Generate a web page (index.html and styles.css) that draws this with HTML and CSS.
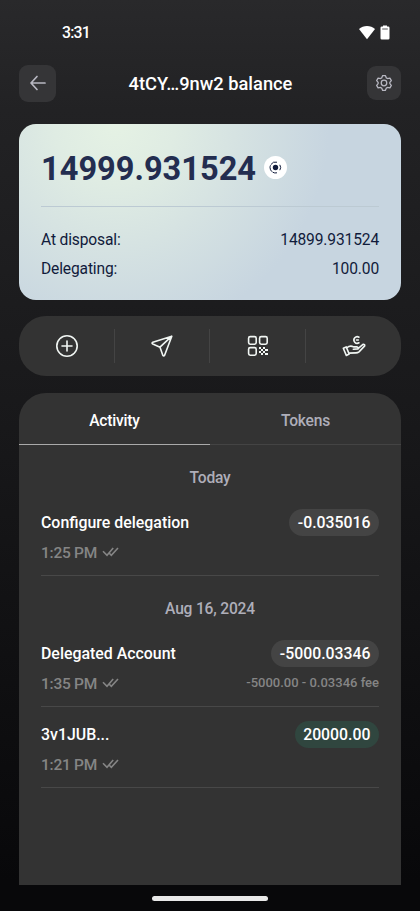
FILE: index.html
```
<!DOCTYPE html>
<html lang="en">
<head>
<meta charset="utf-8">
<title>Account balance</title>
<link rel="stylesheet" href="styles.css">
</head>
<body>
<div class="screen">
  <div class="statusbar">
    <span class="clock">3:31</span>
    <div class="status-icons">
      <svg width="18" height="15" viewBox="0 0 18 15"><path d="M9 14.200 1 4.100C3.200 2 6 .9 9 .9s5.800 1.100 8 3.200z" fill="#fff"/></svg>
      <svg width="10" height="15" viewBox="0 0 10 15"><path d="M3 .5h4v1h1.200q1.300 0 1.300 1.300v10.500q0 1.300-1.300 1.300H1.800Q.5 14.600.5 13.300V2.800Q.5 1.500 1.800 1.500H3z" fill="#fff"/><path d="M2.200 4h5.600" stroke="#29292b" stroke-width=".8"/></svg>
    </div>
  </div>
  <header class="header">
    <button class="square back" aria-label="Back"><svg width="18" height="18" viewBox="0 0 18 18"><path d="M16 9H2.200M8 2.500 2 9l6 6.500"/></svg></button>
    <h1>4tCY…9nw2 balance</h1>
    <button class="square settings" aria-label="Settings"><svg width="18" height="18" viewBox="0 0 24 24"><circle cx="12" cy="12" r="3.700"/><path d="M10.200 2.100h3.600q.8 1.800 1.300 3.100l1.500.9 3.300-.5 1.900 3.200L19.800 11.200v1.600l2 2.400-1.900 3.200-3.300-.5-1.500.9-1.300 3.100h-3.600l-1.300-3.100-1.500-.9-3.300.5-1.900-3.200 2-2.400v-1.600l-2-2.400 1.900-3.200 3.300.5 1.500-.9z"/></svg></button>
  </header>
  <section class="card">
    <div class="total">
      <span class="amount">14999.931524</span>
      <span class="coin"><svg width="23" height="23" viewBox="0 0 23 23"><circle cx="11.500" cy="11.500" r="2.700" fill="#111b3b"/><path d="M13 6.200a5.500 5.500 0 1 0 0 10.600M15.800 8.800q1.800 2.700 0 5.400" fill="none" stroke="#111b3b" stroke-width="1" stroke-dasharray="7 .8"/></svg></span>
    </div>
    <dl class="split">
      <div><dt>At disposal:</dt><dd>14899.931524</dd></div>
      <div><dt>Delegating:</dt><dd>100.00</dd></div>
    </dl>
  </section>
  <nav class="actions">
    <button aria-label="Add"><svg width="24" height="24" viewBox="0 0 24 24"><circle cx="12" cy="12" r="10.200"/><path d="M12 7v10M7 12h10"/></svg></button>
    <button aria-label="Send"><svg width="24" height="24" viewBox="0 0 24 24"><path d="M21.800 2.200 2.800 8.300q-1.500.8 0 1.700L10 13.200l2.800 8q.9 1.300 1.800 0zM10 13.200l11.800-11"/></svg></button>
    <button aria-label="Receive"><svg width="24" height="24" viewBox="0 0 24 24"><rect x="2.600" y="2.600" width="7.600" height="7.600" rx="1.600"/><rect x="13.600" y="2.600" width="7.600" height="7.600" rx="1.600"/><rect x="2.600" y="13.600" width="7.600" height="7.600" rx="1.600"/><path class="solid" d="M13 13h2v2h-2zM17 13h2v2h-2zM15 15h2v2h-2zM19 15h3v2h-3zM13 17h2v2h-2zM17 17h2v2h-2zM15 19h2v2h-2zM19 19h3v2h-3z"/></svg></button>
    <button aria-label="Earn"><svg width="24" height="24" viewBox="0 0 24 24"><path d="M17 3.200a3.300 3.300 0 1 0 0 5.600M14.500 6h1.800M1.300 14.200l2.900-1.300 3 7.200-2.900 1.300zM4.700 13.800q3.500-2.700 6.800-.9h3.300q1.700.4 1.200 2l-4.700.4M16 14.600l5-4.200q2-.3 1.700 1.500l-5.700 6q-1.300 1-3 1l-6.900.2"/></svg></button>
  </nav>
  <main class="panel">
    <div class="tabs"><span class="tab active">Activity</span><span class="tab">Tokens</span></div>
    <div class="list">
      <h2>Today</h2>
      <article class="entry">
        <div class="line"><span>Configure delegation</span><b class="pill">-0.035016</b></div>
        <div class="meta"><time>1:25 PM</time><svg width="17" height="10" viewBox="0 0 17 10"><path d="m1 4.200 4 4L11.200 1M7.300 6.300l2 2L16 1"/></svg></div>
      </article>
      <h2>Aug 16, 2024</h2>
      <article class="entry">
        <div class="line"><span>Delegated Account</span><b class="pill">-5000.03346</b></div>
        <div class="meta"><time>1:35 PM</time><svg width="17" height="10" viewBox="0 0 17 10"><path d="m1 4.200 4 4L11.200 1M7.300 6.300l2 2L16 1"/></svg><span class="fee">-5000.00 - 0.03346 fee</span></div>
      </article>
      <article class="entry">
        <div class="line"><span>3v1JUB...</span><b class="pill in">20000.00</b></div>
        <div class="meta"><time>1:21 PM</time><svg width="17" height="10" viewBox="0 0 17 10"><path d="m1 4.200 4 4L11.200 1M7.300 6.300l2 2L16 1"/></svg></div>
      </article>
    </div>
  </main>
  <div class="home-bar"></div>
</div>
</body>
</html>
```
FILE: styles.css
```
* { box-sizing: border-box; margin: 0; padding: 0; }
body { font-family: Roboto, sans-serif; color: #fff; background: #08080a; }
button { background: none; border: 0; color: inherit; }
svg { display: block; fill: none; flex: none; }
.screen {
  height: 911px; padding: 0 19px; display: flex; flex-direction: column;
  background: linear-gradient(#29292b 0, #222224 110px, #19191b 400px, #08080a 880px);
}
.statusbar { height: 64px; padding: 0 11px 0 43px; display: flex; align-items: center; justify-content: space-between; }
.clock { font-size: 15.800px; font-weight: 500; letter-spacing: -.8px; padding-top: 1px; }
.status-icons { display: flex; gap: 4px; }
.header { height: 38px; display: flex; align-items: center; justify-content: space-between; }
.header h1 { font-size: 18.300px; font-weight: 500; line-height: 24px; padding-top: 2px; margin-left: -2px; }
.square { width: 37px; height: 37px; border-radius: 9px; background: #353537; display: flex; align-items: center; justify-content: center; }
.square svg { stroke: #b8b8c2; stroke-width: 1.700; stroke-linecap: round; stroke-linejoin: round; }
.settings { width: 34px; height: 34px; }
.card {
  height: 176px; margin-top: 21.500px; padding: 0 22px; border-radius: 17px; color: #111b3b;
  background: radial-gradient(circle at 25% 0, #e5f2e4 0, #dfece3 60px, #d6e3e2 120px, #c7d5e0 215px);
}
.total { height: 83px; padding-top: 8px; border-bottom: 1px solid #bccad3; display: flex; align-items: center; gap: 8px; }
.amount { font-size: 32.600px; font-weight: 700; color: #232d50; }
.coin { width: 23px; height: 23px; border-radius: 50%; background: #fff; margin-top: -3px; }
.split { padding-top: 19.500px; font-size: 15.600px; letter-spacing: -.15px; line-height: 29px; }
.split div { display: flex; justify-content: space-between; }
.actions { height: 60px; margin-top: 16.800px; border-radius: 27px; background: #333; display: grid; grid-template-columns: repeat(4, 1fr); align-items: center; }
.actions button { height: 34px; padding-left: 1px; display: flex; align-items: center; justify-content: center; }
.actions button:not(:last-child) { border-right: 1px solid #444; }
.actions svg { stroke: #f1f6f3; stroke-width: 1.600; stroke-linejoin: round; stroke-linecap: round; }
.actions .solid { fill: #f1f6f3; stroke: none; }
.panel { height: 491.700px; margin-top: 17px; border-radius: 27px 27px 0 0; background: #333; overflow: hidden; }
.tabs { height: 51.600px; display: grid; grid-template-columns: 1fr 1fr; }
.tab { font-size: 15.600px; letter-spacing: -.2px; font-weight: 500; line-height: 24px; padding-top: 16px; text-align: center; color: #aeaeb9; border-bottom: 1px solid #444; }
.tab.active { color: #fff; border-color: #aaa; }
.list { padding: 0 22px; }
.list h2 { font-size: 15.600px; letter-spacing: -.2px; font-weight: 500; line-height: 24px; text-align: center; color: #aeaeb9; padding-top: 21px; }
.entry { height: 81px; padding-top: 14px; border-bottom: 1px solid #484848; }
h2 + .entry { height: 86px; padding-top: 19px; }
.line, .meta { display: flex; align-items: center; font-size: 15.900px; font-weight: 500; }
.line { height: 27px; justify-content: space-between; }
.pill { height: 27px; padding: 0 8.600px; border-radius: 14px; background: #444; line-height: 28px; font-size: 15.800px; font-weight: 500; }
.pill.in { background: #30463f; }
.meta { height: 22px; margin-top: 6px; color: #858585; gap: 5px; font-size: 15.500px; }
.meta time { letter-spacing: -.25px; }
.meta svg { stroke: #858585; stroke-width: 1.600; margin-top: -1px; }
.fee { margin-left: auto; font-size: 13px; transform: translateY(-1px); }
.home-bar { width: 116px; height: 5px; margin: 11px auto 0; border-radius: 3px; background: #e8e8e8; }
```
